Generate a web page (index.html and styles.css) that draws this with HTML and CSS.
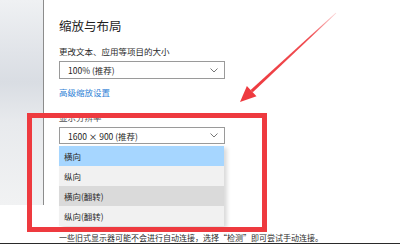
FILE: index.html
```html
<!DOCTYPE html>
<html lang="zh-CN">
<head>
    <meta charset="UTF-8">
    <meta name="viewport" content="width=device-width, initial-scale=1.0">
    <title>显示设置</title>
    <link rel="stylesheet" href="styles.css">
</head>
<body>
    <div class="page">
        <aside class="sidebar"></aside>
        <main class="content">
            <h2 class="title">缩放与布局</h2>
            <div class="label">更改文本、应用等项目的大小</div>
            <div class="select">
                <span>100% (推荐)</span>
                <svg class="chevron" width="8" height="5" viewBox="0 0 8 5"><path d="M0.5 0.5 L4 4 L7.5 0.5" fill="none" stroke="#777" stroke-width="1"/></svg>
            </div>
            <a class="link" href="#">高级缩放设置</a>
            <div class="label label-res">显示分辨率</div>
            <div class="select select-res">
                <span>1600 × 900 (推荐)</span>
                <svg class="chevron" width="8" height="5" viewBox="0 0 8 5"><path d="M0.5 0.5 L4 4 L7.5 0.5" fill="none" stroke="#777" stroke-width="1"/></svg>
            </div>
            <ul class="menu">
                <li class="menu-item selected">横向</li>
                <li class="menu-item">纵向</li>
                <li class="menu-item hover">横向(翻转)</li>
                <li class="menu-item">纵向(翻转)</li>
            </ul>
            <p class="note">一些旧式显示器可能不会进行自动连接，选择“检测”即可尝试手动连接。</p>
        </main>

        <!-- annotation overlays -->
        <div class="highlight-box"></div>
        <svg class="arrow" width="400" height="244" viewBox="0 0 400 244">
            <defs>
                <linearGradient id="fade" x1="336" y1="13" x2="252" y2="91" gradientUnits="userSpaceOnUse">
                    <stop offset="0" stop-color="#ee3a3f" stop-opacity="0.2"/>
                    <stop offset="0.3" stop-color="#ee3a3f" stop-opacity="0.9"/>
                    <stop offset="1" stop-color="#ee3a3f"/>
                </linearGradient>
            </defs>
            <polygon points="336.3,13.3 335.7,12.7 250.6,89.9 252.8,92.3" fill="url(#fade)"/>
            <polygon points="240,102 246.9,86 256.5,96.2" fill="#ee3a3f"/>
        </svg>
    </div>
</body>
</html>
```

FILE: styles.css
```css
body {
    margin: 0;
    background-color: #fff;
    font-family: "Noto Sans CJK SC", "Liberation Sans", sans-serif;
}

.page {
    position: relative;
    display: flex;
    width: 400px;
    height: 243px;
    overflow: hidden;
    border-bottom: 1px solid #2a2a2a;
}

.sidebar {
    width: 43px;
    height: 205px;
    flex-shrink: 0;
    border-right: 1px solid #8c8c8c;
    background: linear-gradient(#eff1f3 0%, #e1e4e9 25%, #d9dde3 40%, #e8eaed 60%, #f1f2f3 100%);
}

.content {
    flex: 1;
    padding: 18px 0 0 15px;
    color: #2a2a2a;
}

.title {
    margin: 0;
    height: 16px;
    font-size: 12.5px;
    line-height: 16px;
    font-weight: normal;
    color: #1e1e1e;
}

.label {
    margin-top: 11px;
    height: 12px;
    font-size: 8.5px;
    line-height: 12px;
    color: #2a2a2a;
}

.label-res {
    margin-top: 13px;
    color: #555;
}

.select {
    display: flex;
    align-items: center;
    justify-content: space-between;
    box-sizing: border-box;
    width: 166px;
    height: 18px;
    margin-top: 4px;
    padding: 0 6px 0 8px;
    border: 1px solid #9a9a9a;
    font-size: 8.5px;
    color: #1e1e1e;
}

.select-res {
    height: 17px;
}

.link {
    display: block;
    margin-top: 7px;
    height: 12px;
    font-size: 8.5px;
    line-height: 12px;
    color: #2f82d6;
    text-decoration: none;
}

.menu {
    list-style: none;
    margin: 2px 0 0 0;
    padding: 0;
    width: 165px;
    background-color: #f1f1f1;
    box-shadow: 3px 2px 4px rgba(0, 0, 0, 0.15);
}

.menu-item {
    height: 20px;
    padding-left: 5px;
    font-size: 8.5px;
    line-height: 20px;
    color: #2a2a2a;
}

.menu-item.selected {
    background-color: #a6d6ff;
}

.menu-item.hover {
    background-color: #dadada;
}

.note {
    margin: 6px 0 0 0;
    height: 12px;
    font-size: 8px;
    line-height: 12px;
    color: #2a2a2a;
    white-space: nowrap;
}

/* red annotation */
.highlight-box {
    position: absolute;
    left: 27px;
    top: 113px;
    width: 240px;
    height: 119px;
    box-sizing: border-box;
    border: 5px solid #ee3a3f;
    pointer-events: none;
}

.arrow {
    position: absolute;
    left: 0;
    top: 0;
    pointer-events: none;
}
```
